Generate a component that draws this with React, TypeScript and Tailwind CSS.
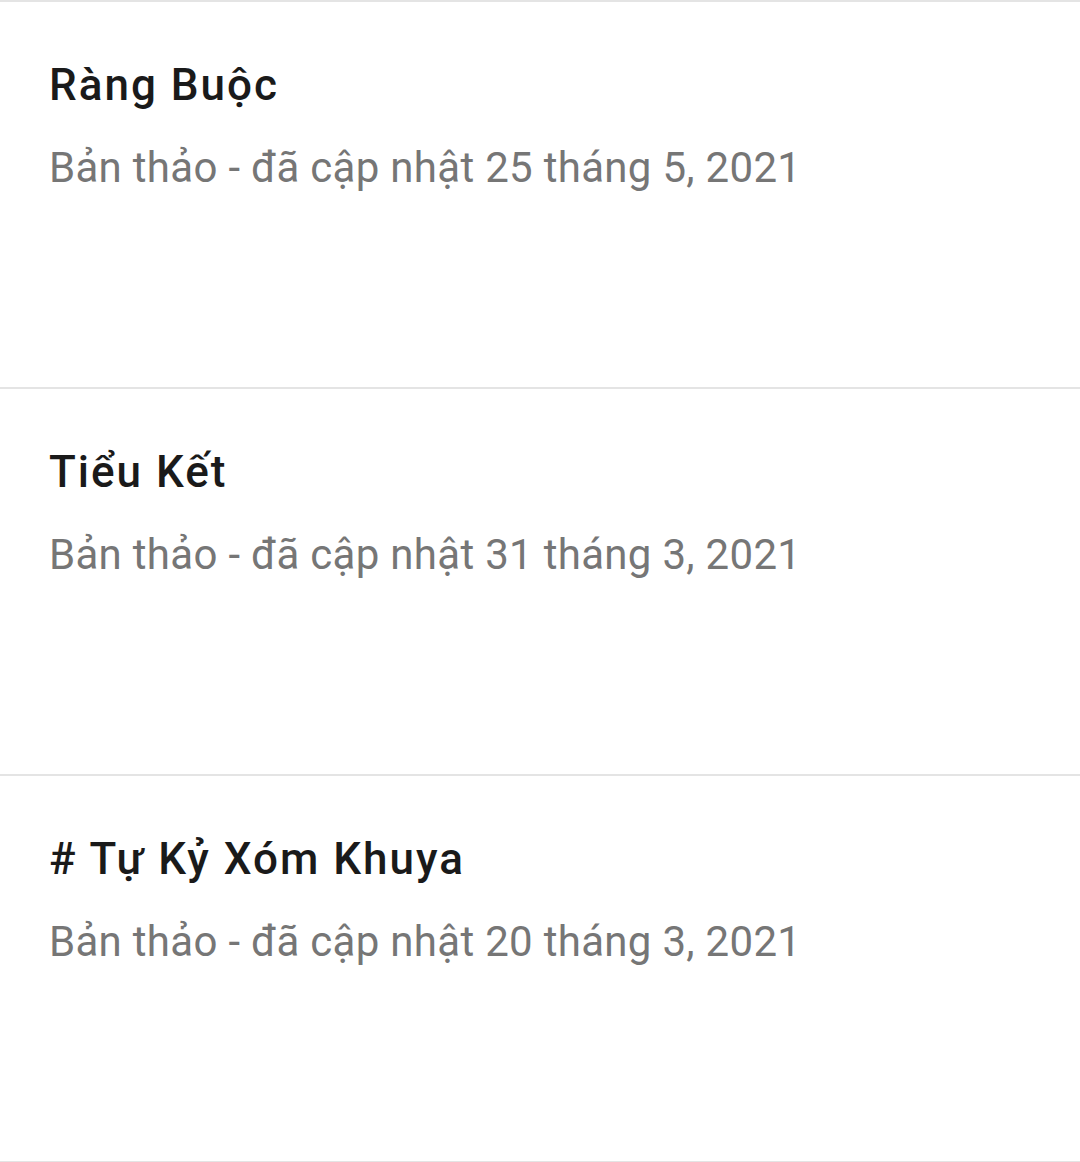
const drafts = [
  { title: 'Ràng Buộc', date: '25 tháng 5, 2021' },
  { title: 'Tiểu Kết', date: '31 tháng 3, 2021' },
  { title: '# Tự Kỷ Xóm Khuya', date: '20 tháng 3, 2021' },
];

export default function App() {
  return (
    <div className="min-h-screen w-full bg-white font-['Roboto','Noto_Sans',sans-serif]">
      <div className="border-t-2 border-[#e4e4e4]">
        {drafts.map((d) => (
          <div key={d.title} className="h-[387px] border-b-2 border-[#e4e4e4] pl-[49px] pt-[57px]">
            <h2 className="text-[44px] leading-[52px] font-medium tracking-[2px] text-[#1a1a1a]">{d.title}</h2>
            <p className="mt-[33px] text-[42px] leading-[48px] tracking-[0.3px] text-[#767676]">
              Bản thảo - đã cập nhật {d.date}
            </p>
          </div>
        ))}
      </div>
    </div>
  );
}
